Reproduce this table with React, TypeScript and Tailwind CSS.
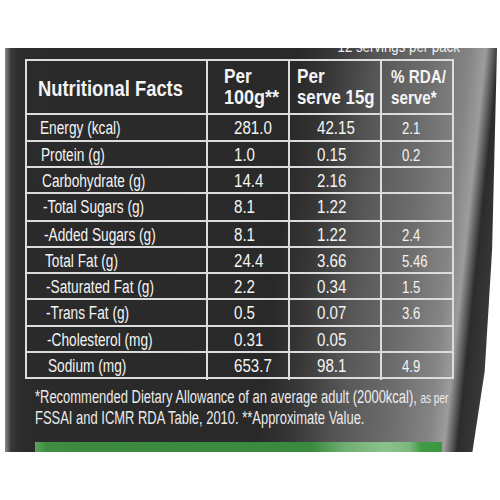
import React from "react";

type Row = { label: string; a: string; b: string; c: string; h: string; pl: string };

const rows: Row[] = [
  { label: "Energy (kcal)", a: "281.0", b: "42.15", c: "2.1", h: "h-[27px]", pl: "pl-[13px]" },
  { label: "Protein (g)", a: "1.0", b: "0.15", c: "0.2", h: "h-[26px]", pl: "pl-[14px]" },
  { label: "Carbohydrate (g)", a: "14.4", b: "2.16", c: "", h: "h-[26px]", pl: "pl-[15px]" },
  { label: "-Total Sugars (g)", a: "8.1", b: "1.22", c: "", h: "h-[28px]", pl: "pl-[16px]" },
  { label: "-Added Sugars (g)", a: "8.1", b: "1.22", c: "2.4", h: "h-[26px]", pl: "pl-[17px]" },
  { label: "Total Fat (g)", a: "24.4", b: "3.66", c: "5.46", h: "h-[26px]", pl: "pl-[18px]" },
  { label: "-Saturated Fat (g)", a: "2.2", b: "0.34", c: "1.5", h: "h-[26px]", pl: "pl-[19px]" },
  { label: "-Trans Fat (g)", a: "0.5", b: "0.07", c: "3.6", h: "h-[27px]", pl: "pl-[19px]" },
  { label: "-Cholesterol (mg)", a: "0.31", b: "0.05", c: "", h: "h-[26px]", pl: "pl-[20px]" },
  { label: "Sodium (mg)", a: "653.7", b: "98.1", c: "4.9", h: "h-[24px]", pl: "pl-[21px]" },
];

function N({ children, cls }: { children: React.ReactNode; cls: string }) {
  return <span className={`inline-block whitespace-nowrap ${cls}`}>{children}</span>;
}

export default function App() {
  return (
    <div className="w-[500px] h-[500px] bg-white overflow-hidden font-['Liberation_Sans',Arial,sans-serif]">
      <div className="h-[48px]" />
      <div className="ml-[5px] w-[492px] h-[404px] overflow-hidden flex flex-col [clip-path:polygon(0_0,100%_0,99%_50%,97.5%_80%,95%_100%,0_100%)] bg-[linear-gradient(90deg,#8a8a8a_0px,rgba(58,58,58,0.9)_6px,rgba(50,50,50,0.4)_14px,rgba(0,0,0,0)_24px),linear-gradient(96deg,#2b2b2b_0%,#292929_55%,#363636_61%,#575757_70%,#6e6e6e_80%,#858585_87%,#9c9c9c_90%,#2c2c2c_92.5%,#3a3a3a_96%,#666666_100%)]">
        {/* clipped servings line */}
        <div className="h-[11px] overflow-hidden flex justify-end pr-[37px]">
          <div className="-mt-[10px] text-[17px] leading-[17px] text-[#eeeeee]">
            <N cls="scale-x-[0.78] origin-right">12 servings per pack</N>
          </div>
        </div>

        {/* table */}
        <div className="ml-[20px] w-[429px] border-2 border-[#dcdcdc] text-[#f4f4f4]">
          <div className="grid grid-cols-[181px_82px_92px_70px] h-[54px] border-b-2 border-[#dcdcdc] font-bold">
            <div className="border-r-2 border-[#dcdcdc] flex items-center pl-[11px] pt-[3px] text-[22px]">
              <N cls="scale-x-[0.835] origin-left">Nutritional Facts</N>
            </div>
            <div className="border-r-2 border-[#dcdcdc] flex flex-col justify-center pl-[16px] text-[20px] leading-[21px]">
              <N cls="scale-x-[0.86] origin-left">Per</N>
              <N cls="scale-x-[0.9] origin-left">100g**</N>
            </div>
            <div className="border-r-2 border-[#dcdcdc] flex flex-col justify-center pl-[7px] text-[20px] leading-[21px]">
              <N cls="scale-x-[0.86] origin-left">Per</N>
              <N cls="scale-x-[0.84] origin-left">serve 15g</N>
            </div>
            <div className="flex flex-col justify-center pl-[9px] text-[19px] leading-[21px]">
              <N cls="scale-x-[0.8] origin-left">% RDA/</N>
              <N cls="scale-x-[0.8] origin-left">serve*</N>
            </div>
          </div>
          {rows.map((r, i) => (
            <div
              key={r.label}
              className={`grid grid-cols-[181px_82px_92px_70px] ${r.h} ${i < rows.length - 1 ? "border-b-2 border-[#dcdcdc]" : ""}`}
            >
              <div className={`border-r-2 border-[#dcdcdc] flex items-center text-[18px] ${r.pl}`}>
                <N cls="scale-x-[0.76] origin-left">{r.label}</N>
              </div>
              <div className="border-r-2 border-[#dcdcdc] flex items-center pl-[26px] text-[18px]">
                <N cls="scale-x-[0.84] origin-left">{r.a}</N>
              </div>
              <div className="border-r-2 border-[#dcdcdc] flex items-center pl-[27px] text-[18px]">
                <N cls="scale-x-[0.84] origin-left">{r.b}</N>
              </div>
              <div className="flex items-center pl-[20px] text-[16px]">
                <N cls="scale-x-[0.82] origin-left">{r.c}</N>
              </div>
            </div>
          ))}
        </div>

        {/* footnote */}
        <div className="ml-[30px] mt-[8px] text-[18px] leading-[20px] text-[#ececec] flex flex-col items-start">
          <N cls="scale-x-[0.72] origin-left">
            *Recommended Dietary Allowance of an average adult (2000kcal), <span className="text-[14px]">as per</span>
          </N>
          <N cls="scale-x-[0.72] origin-left">FSSAI and ICMR RDA Table, 2010. **Approximate Value.</N>
        </div>

        <div className="mt-auto ml-[30px] w-[407px] h-[10px] bg-[linear-gradient(90deg,#5aa35c_0%,#3d8c41_3%,#3a8a3e_68%,#6fae72_76%,#8cc18d_86%,#7cb77e_92%,#3f9a44_95%,#3b9640_100%)]" />
      </div>
    </div>
  );
}
